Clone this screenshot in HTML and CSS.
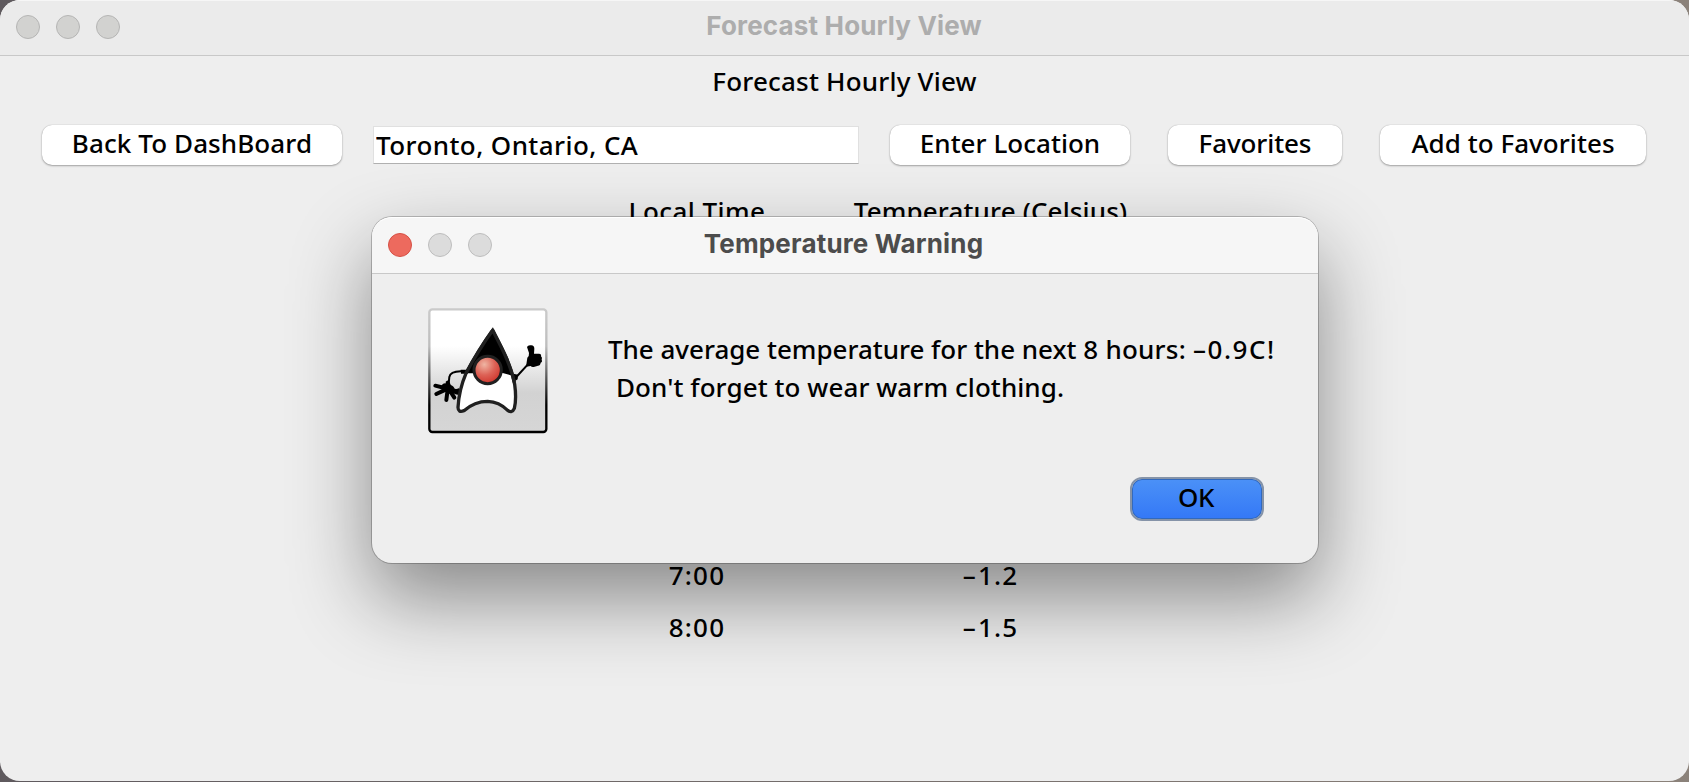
FILE: index.html
```html
<!DOCTYPE html>
<html lang="en">
<head>
<meta charset="utf-8">
<title>Forecast Hourly View</title>
<link rel="stylesheet" href="styles.css">
</head>
<body>
<main class="window">
  <header class="titlebar">
    <div class="lights"><i class="light"></i><i class="light"></i><i class="light"></i></div>
    <span class="title">Forecast Hourly View</span>
  </header>
  <h1 class="heading">Forecast Hourly View</h1>
  <div class="toolbar">
    <button class="button back">Back To DashBoard</button>
    <input class="location" type="text" value="Toronto, Ontario, CA" aria-label="Location">
    <button class="button enter">Enter Location</button>
    <button class="button favorites">Favorites</button>
    <button class="button add">Add to Favorites</button>
  </div>
  <div class="forecast">
    <div class="row labels"><span class="time">Local Time</span><span class="temp">Temperature (Celsius)</span></div>
    <div class="covered"></div>
    <div class="row"><span class="time">7:00</span><span class="temp"><b class="minus">–</b>1.2</span></div>
    <div class="row"><span class="time">8:00</span><span class="temp"><b class="minus">–</b>1.5</span></div>
  </div>
</main>

<section class="dialog" role="dialog" aria-label="Temperature Warning">
  <header class="titlebar dialog-bar">
    <div class="lights"><i class="light close"></i><i class="light"></i><i class="light"></i></div>
    <span class="title">Temperature Warning</span>
  </header>
  <div class="content">
    <svg class="duke" viewBox="0 0 378 396" width="126" height="132" aria-hidden="true">
      <defs>
        <linearGradient id="panel" x1="0" y1="0" x2="0" y2="1">
          <stop offset="0" stop-color="#fff"/><stop offset=".3" stop-color="#fff"/>
          <stop offset=".68" stop-color="#d2d2d2"/><stop offset="1" stop-color="#d6d6d6"/>
        </linearGradient>
        <linearGradient id="frame" x1="0" y1="0" x2="0" y2="1">
          <stop offset="0" stop-color="#cacaca"/><stop offset=".3" stop-color="#bdbdbd"/>
          <stop offset=".78" stop-color="#000"/><stop offset="1" stop-color="#000"/>
        </linearGradient>
        <radialGradient id="nose" cx=".38" cy=".3" r=".7">
          <stop offset="0" stop-color="#efb5a3"/><stop offset=".55" stop-color="#dd6256"/><stop offset="1" stop-color="#d0382f"/>
        </radialGradient>
      </defs>
      <rect x="13" y="13" width="351" height="368" rx="9" fill="url(#panel)" stroke="url(#frame)" stroke-width="7"/>
      <path d="M122 199H107Q76 200 73 216L71 236" fill="none" stroke="#000" stroke-width="6"/>
      <path d="M107 194h18v12h-17zM84 250q12 4 17-1l5 18q-10 5-22-3z"/>
      <g fill="none" stroke="#000" stroke-linecap="round">
        <path d="M68 233l4 10M31 242l28 7M34 267l23-11M64 285l3-24M88 278l-12-19M72 252l22 8" stroke-width="12"/>
        <path d="M61 247l15 6" stroke-width="25"/>
      </g>
      <path d="M265 206l14 3-1 14-9 6z"/>
      <path d="M274 216l34-37" stroke="#000" stroke-width="6"/>
      <path d="M306 126q3-7 13-5 9 1 9 10l-1 15h15q8 1 6 8 5 4 2 10 3 7-3 9-1 9-8 9l-10 3q-8 3-12-2l-14 2 4-27q6-4 5-14z"/>
      <path d="M203 76C180 108 151 153 123 205C108 240 101 270 99 307Q99 324 117 317Q149 289 188 289Q222 290 248 316Q261 326 268 310Q275 282 269 238C258 178 230 128 203 76Z" fill="#fff" stroke="#202020" stroke-width="10" stroke-linejoin="miter"/>
      <path d="M203 79C180 110 151 155 125 205H145L233 204L265 213C252 166 230 127 203 79Z"/>
      <path d="M203 76C180 108 151 153 123 205M268 232C256 176 230 128 203 76" fill="none" stroke="#202020" stroke-width="10"/>
      <circle cx="188" cy="195" r="41" fill="url(#nose)" stroke="#202020" stroke-width="9"/>
    </svg>
    <p class="message"><span class="line first">The average temperature for the next <span class="hours">8 hours: </span><span class="value">–0.9C!</span></span><span class="line second">Don't forget to wear warm clothing.</span></p>
  </div>
  <footer class="actions"><button class="ok">OK</button></footer>
</section>
</body>
</html>
```
FILE: styles.css
```css
* { box-sizing: border-box; }

body {
  margin: 0;
  height: 782px;
  overflow: hidden;
  background: linear-gradient(90deg, #5f5a5e, #8b827a);
  font: 500 26px/36px "Noto Sans", sans-serif;
  color: #000;
}

button, input { font: inherit; color: inherit; }

.window {
  height: 781px;
  background: #eee;
  border-radius: 20px;
  overflow: hidden;
}

.titlebar {
  position: relative;
  display: flex;
  align-items: center;
  justify-content: center;
  height: 56px;
  padding: 0 1px 5px 0;
  background: #ebebeb;
  border-top: 1px solid #f6f6f6;
  border-bottom: 1px solid #c8c8c8;
  color: #adadad;
}

.title {
  font: 700 26px/32px Inter, sans-serif;
  letter-spacing: 0.17px;
}

.lights {
  position: absolute;
  left: 16px;
  top: 14px;
  display: flex;
  gap: 16px;
}

.light {
  width: 24px;
  height: 24px;
  border: 1px solid #b5b5b4;
  border-radius: 50%;
  background: #d2d2d0;
}

.heading {
  margin: 7px 0 0;
  font: inherit;
  text-align: center;
  letter-spacing: 0.2px;
}

.toolbar {
  display: flex;
  align-items: center;
  height: 40px;
  margin-top: 26px;
  padding-left: 42px;
}

.button {
  height: 40px;
  padding: 0 0 4px;
  border: 0;
  border-radius: 10px;
  background: #fff;
  box-shadow: 0 0 1px rgba(0, 0, 0, 0.3), 0 1px 2px rgba(0, 0, 0, 0.3);
  white-space: nowrap;
}

.back { width: 300px; letter-spacing: 0.1px; }
.enter { width: 240px; margin-left: 31px; letter-spacing: 0.03px; }
.favorites { width: 174px; margin-left: 38px; letter-spacing: -0.1px; }
.add { width: 266px; margin-left: 38px; letter-spacing: 0.05px; }

.location {
  width: 486px;
  height: 38px;
  margin-left: 31px;
  padding: 0 0 0 2px;
  border: 1px solid #e0e0e0;
  border-bottom: 1px solid #b0b0b0;
  background: #fff;
  letter-spacing: 0.42px;
}

.forecast { padding-top: 20px; }

.row {
  display: grid;
  grid-template-columns: 256px 331px;
  height: 52px;
  padding-left: 569px;
  line-height: 52px;
  text-align: center;
  letter-spacing: 1.2px;
}

.labels .time { letter-spacing: 0.45px; }
.labels .temp { letter-spacing: 0.15px; }
.covered { height: 312px; }
.minus { margin-right: 1px; font-weight: inherit; }

.dialog {
  position: absolute;
  left: 372px;
  top: 217px;
  width: 946px;
  height: 346px;
  border-radius: 20px;
  background: #eee;
  box-shadow: 0 0 0 1px rgba(0, 0, 0, 0.22), 0 35px 80px rgba(0, 0, 0, 0.43);
}

.dialog-bar {
  height: 57px;
  padding: 0 3px 4px 0;
  border-top-color: #fff;
  border-radius: 20px 20px 0 0;
  background: #f6f6f6;
  color: #4c4c4c;
}

.dialog-bar .light { border-color: #bdbdbd; background: #dcdcdc; }
.dialog-bar .lights { top: 15px; }
.dialog-bar .close { border-color: #d65045; background: #ed6a5e; }

.content {
  display: flex;
  height: 203px;
  padding: 31px 0 0 53px;
}

.duke { flex: none; }

.message {
  display: flex;
  flex-direction: column;
  margin: 25px 0 0 57px;
  white-space: nowrap;
}

.line { line-height: 38px; }
.first { letter-spacing: -0.02px; }
.hours { letter-spacing: 0.25px; }
.value { letter-spacing: 1.5px; }
.second { padding-left: 8px; letter-spacing: 0.08px; }

.actions {
  display: flex;
  justify-content: flex-end;
  padding-right: 54px;
}

.ok {
  width: 134px;
  height: 44px;
  padding: 0 2px 4px 0;
  border: 2px solid #8593a8;
  border-radius: 12px;
  background: linear-gradient(#4b91f7, #3478f6);
  background-clip: padding-box;
  box-shadow: inset 0 0 0 1px #3269bd;
  letter-spacing: -0.3px;
}
```
